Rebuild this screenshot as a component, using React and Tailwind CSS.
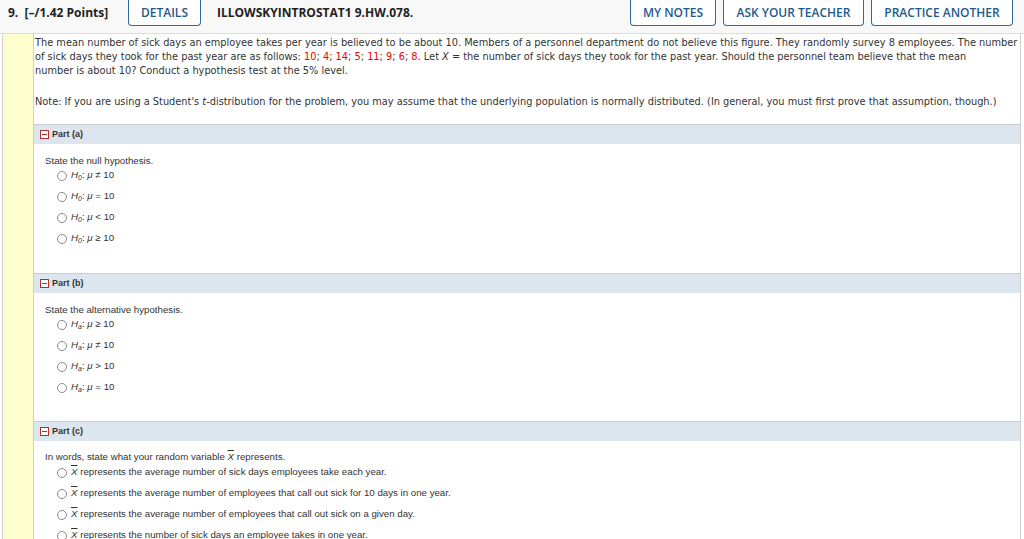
import React from 'react';

const verdana = { fontFamily: '"DejaVu Sans", Verdana, sans-serif' };

function Radio() {
  return <span className="inline-block w-[10px] h-[10px] rounded-full border border-[#8a8a8a] bg-white shrink-0" />;
}

function PartHeader({ label }) {
  return (
    <div className="h-[20px] border-t border-[#cccccc] bg-[#dde5ee] flex items-center pl-[6px] gap-[3px]">
      <span className="w-[9px] h-[9px] border border-[#b03030] bg-white flex items-center justify-center">
        <span className="w-[5px] h-[1px] bg-[#b03030]" />
      </span>
      <span className="font-bold text-[9px] text-[#333]">Part ({label})</span>
    </div>
  );
}

function H({ sub }) {
  return (
    <span>
      <i>H</i>
      <sub className="text-[7px] italic">{sub}</sub>:
    </span>
  );
}

function Xbar() {
  return <i className="overline">X</i>;
}

function Option({ children }) {
  return (
    <div className="h-[21px] flex items-center gap-[4px] pl-[12px]">
      <Radio />
      <span>{children}</span>
    </div>
  );
}

export default function App() {
  const nums = ['10', '4', '14', '5', '11', '9', '6', '8'];

  return (
    <div className="w-[1024px] h-[539px] overflow-hidden bg-white text-[#333]">
      {/* top bar */}
      <div
        className="h-[34px] bg-[#f8f8f8] border-b border-[#dddddd] flex items-start"
        style={{ fontFamily: '"Open Sans", sans-serif' }}
      >
        <div className="pl-[8px] pt-[4px] text-[12px] font-bold text-[#222] w-[128px]">
          9.&nbsp; [–/1.42 Points]
        </div>
        <button className="h-[26px] w-[73px] border border-t-0 border-[#2d6b9c] rounded-b-[4px] text-[12px] font-semibold text-[#1d5a8c] bg-white">
          DETAILS
        </button>
        <div className="pl-[16px] pt-[4px] text-[12px] font-bold text-[#222]">ILLOWSKYINTROSTAT1 9.HW.078.</div>
        <div className="ml-auto flex gap-[7px] pr-[11px]">
          <button className="h-[26px] w-[86px] border border-t-0 border-[#2d6b9c] rounded-b-[4px] text-[12px] font-semibold text-[#1d5a8c] bg-white">
            MY NOTES
          </button>
          <button className="h-[26px] w-[141px] border border-t-0 border-[#2d6b9c] rounded-b-[4px] text-[12px] font-semibold text-[#1d5a8c] bg-white">
            ASK YOUR TEACHER
          </button>
          <button className="h-[26px] w-[142px] border border-t-0 border-[#2d6b9c] rounded-b-[4px] text-[12px] font-semibold text-[#1d5a8c] bg-white">
            PRACTICE ANOTHER
          </button>
        </div>
      </div>

      <div className="flex h-[505px] pl-[2px] pr-[3px]">
        <div className="w-[32px] bg-[#fefecc] border-l border-r border-[#cfcfcf] shrink-0" />
        <div className="flex-1 border-r border-[#cfcfcf]">
          <div className="pl-[1px] pr-[1px] pt-[2px] text-[9.8px] leading-[14px] text-[#333]" style={verdana}>
            The mean number of sick days an employee takes per year is believed to be about 10. Members of a personnel
            department do not believe this figure. They randomly survey 8 employees. The number of sick days they took for
            the past year are as follows:{' '}
            {nums.map((n, i) => (
              <span key={n + i}>
                <span className="text-[#ee0000]">{n}</span>
                {i < nums.length - 1 ? '; ' : '. '}
              </span>
            ))}
            Let <i>X</i> = the number of sick days they took for the past year. Should the personnel team believe that the
            mean<br />number is about 10? Conduct a hypothesis test at the 5% level.
            <div className="mt-[17px]">
              Note: If you are using a Student's <i>t</i>-distribution for the problem, you may assume that the underlying
              population is normally distributed. (In general, you must first prove that assumption, though.)
            </div>
          </div>

          <div className="mt-[15px] text-[9.7px] text-[#333]" style={{ fontFamily: '"Liberation Sans", Arial, sans-serif' }}>
            <PartHeader label="a" />
            <div className="pl-[11px] pt-[11px] pb-[24px]">
              <div className="leading-[12px] -mb-[2px]">State the null hypothesis.</div>
              <Option><H sub="0" /> <i>μ</i> ≠ 10</Option>
              <Option><H sub="0" /> <i>μ</i> = 10</Option>
              <Option><H sub="0" /> <i>μ</i> &lt; 10</Option>
              <Option><H sub="0" /> <i>μ</i> ≥ 10</Option>
            </div>

            <PartHeader label="b" />
            <div className="pl-[11px] pt-[11px] pb-[23px]">
              <div className="leading-[12px] -mb-[2px]">State the alternative hypothesis.</div>
              <Option><H sub="a" /> <i>μ</i> ≥ 10</Option>
              <Option><H sub="a" /> <i>μ</i> ≠ 10</Option>
              <Option><H sub="a" /> <i>μ</i> &gt; 10</Option>
              <Option><H sub="a" /> <i>μ</i> = 10</Option>
            </div>

            <PartHeader label="c" />
            <div className="pl-[11px] pt-[10px]">
              <div className="leading-[12px] -mb-[1px]">
                In words, state what your random variable <Xbar /> represents.
              </div>
              <Option><Xbar /> represents the average number of sick days employees take each year.</Option>
              <Option><Xbar /> represents the average number of employees that call out sick for 10 days in one year.</Option>
              <Option><Xbar /> represents the average number of employees that call out sick on a given day.</Option>
              <Option><Xbar /> represents the number of sick days an employee takes in one year.</Option>
            </div>
          </div>
        </div>
      </div>
    </div>
  );
}
